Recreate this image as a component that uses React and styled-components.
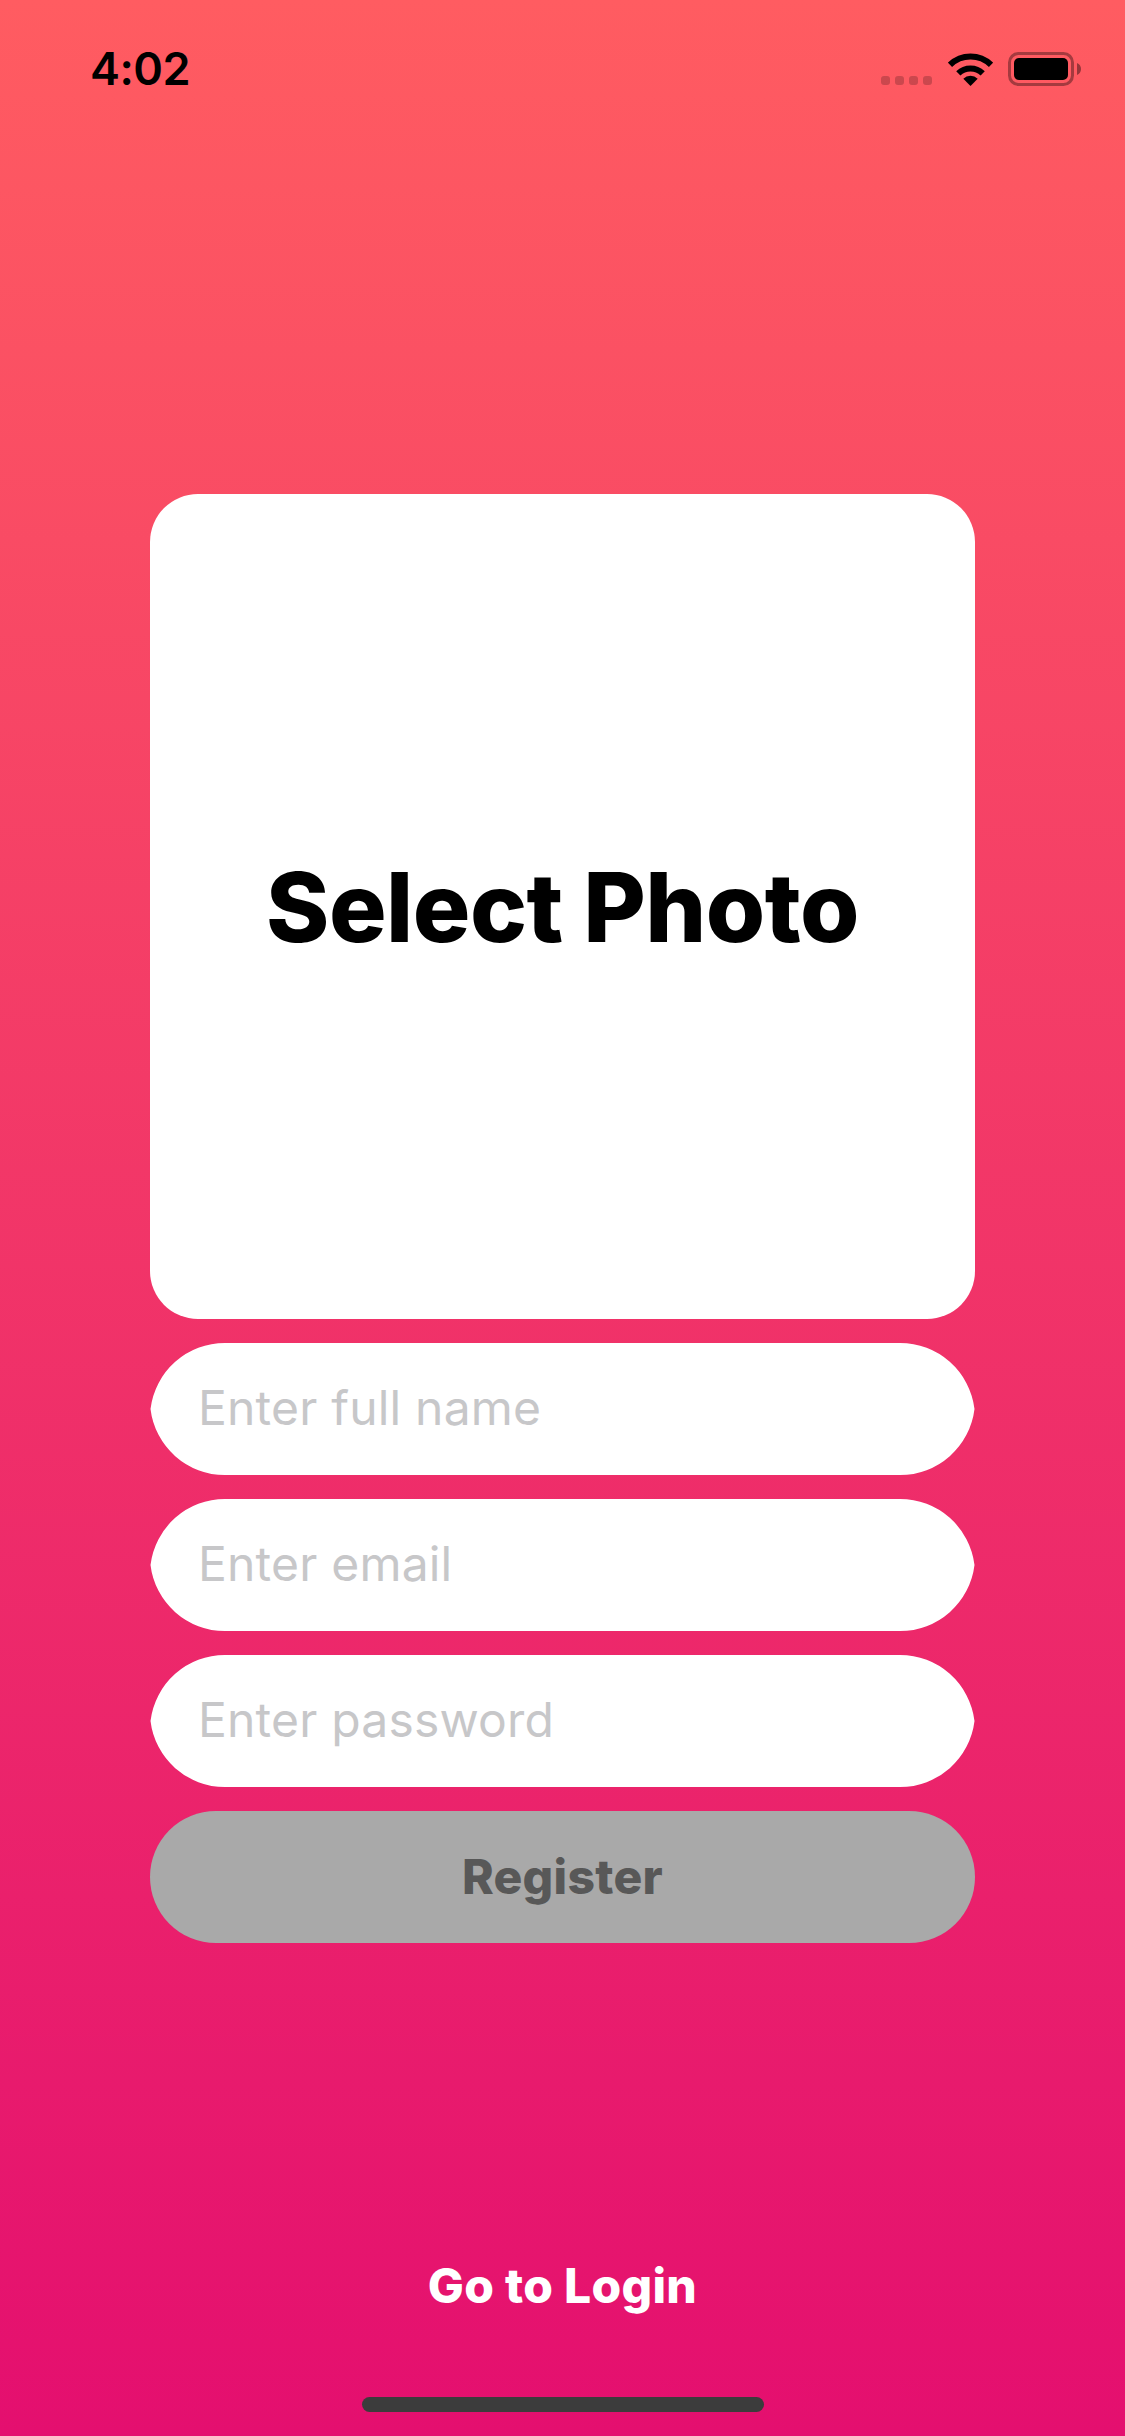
import React from 'react';
import styled, { createGlobalStyle } from 'styled-components';

const GlobalStyle = createGlobalStyle`
  html, body {
    margin: 0;
    padding: 0;
  }
  body {
    font-family: 'Inter', 'Liberation Sans', sans-serif;
  }
`;

const Screen = styled.div`
  width: 1125px;
  height: 2436px;
  display: flex;
  flex-direction: column;
  align-items: center;
  overflow: hidden;
  background: linear-gradient(180deg, #ff5c61 0%, #e40f6f 100%);
`;

const StatusBar = styled.div`
  width: 100%;
  height: 132px;
  box-sizing: border-box;
  padding: 47px 43px 0 90px;
  display: flex;
  justify-content: space-between;
  align-items: flex-start;
`;

const Time = styled.span`
  font-size: 45px;
  line-height: 44px;
  font-weight: 600;
  letter-spacing: -0.5px;
  color: #000;
`;

const StatusIcons = styled.div`
  display: flex;
  align-items: flex-end;
  margin-top: 5px;
`;

const SignalDots = styled.div`
  display: flex;
  gap: 5px;
  margin-right: 16px;
  margin-bottom: 1px;
`;

const SignalDot = styled.span`
  width: 9px;
  height: 9px;
  border-radius: 3px;
  background: rgba(0, 0, 0, 0.2);
`;

const WifiIcon = styled.svg`
  width: 45px;
  height: 33px;
  margin-right: 15px;
`;

const BatteryIcon = styled.svg`
  width: 74px;
  height: 34px;
`;

const Form = styled.form`
  width: 825px;
  margin: 362px 0 0;
  display: flex;
  flex-direction: column;
  gap: 24px;
`;

const PhotoButton = styled.button`
  width: 825px;
  height: 825px;
  border: 0;
  padding: 0;
  border-radius: 48px;
  background: #fff;
  color: #000;
  font-family: inherit;
  font-size: 96px;
  font-weight: 800;
  letter-spacing: -0.5px;
`;

// the two 75px corners overlap on a 132px tall field, so the sides end in a point
const Field = styled.input`
  width: 825px;
  height: 132px;
  box-sizing: border-box;
  border: 0;
  outline: 0;
  padding: 0 48px 3px;
  background: #fff;
  font-family: inherit;
  font-size: 48px;
  letter-spacing: 0.2px;
  color: #000;
  clip-path: path('M75 0 H750 A75 75 0 0 1 824.5 66 A75 75 0 0 1 750 132 H75 A75 75 0 0 1 0.5 66 A75 75 0 0 1 75 0 Z');

  &::placeholder {
    color: #c7c7c9;
    opacity: 1;
  }
`;

const RegisterButton = styled.button`
  height: 132px;
  border: 0;
  padding: 0 0 2px;
  border-radius: 66px;
  background: #a9a9a9;
  color: #585858;
  font-family: inherit;
  font-size: 48px;
  font-weight: 800;
  letter-spacing: 0.3px;
`;

const LoginLink = styled.button`
  margin-top: auto;
  border: 0;
  padding: 0;
  background: none;
  color: #fff;
  font-family: inherit;
  font-size: 48px;
  line-height: 58px;
  font-weight: 800;
  letter-spacing: 0.3px;
`;

const HomeIndicator = styled.div`
  width: 402px;
  height: 15px;
  margin: 82px 0 24px;
  border-radius: 8px;
  background: #3c3c3c;
`;

const App = () => {
  return (
    <Screen>
      <GlobalStyle />
      <StatusBar>
        <Time>4:02</Time>
        <StatusIcons>
          <SignalDots>
            {[0, 1, 2, 3].map((i) => (
              <SignalDot key={i} />
            ))}
          </SignalDots>
          <WifiIcon viewBox="0 0 45 33">
            <path d="M2 11.8 A29.5 29.5 0 0 1 43 11.8" fill="none" stroke="#000" strokeWidth="6" />
            <path d="M10.3 20.4 A17.5 17.5 0 0 1 34.7 20.4" fill="none" stroke="#000" strokeWidth="6" />
            <path d="M22.5 33 L15.3 25.8 A10.2 10.2 0 0 1 29.7 25.8 Z" fill="#000" />
          </WifiIcon>
          <BatteryIcon viewBox="0 0 74 34">
            <rect x="1.5" y="1.5" width="63" height="31" rx="9" fill="none" stroke="#000" strokeOpacity="0.35" strokeWidth="3" />
            <rect x="6" y="6" width="54" height="22" rx="5" fill="#000" />
            <path d="M69 11 C71.5 12 73 14.2 73 17 C73 19.8 71.5 22 69 23 Z" fill="#000" fillOpacity="0.4" />
          </BatteryIcon>
        </StatusIcons>
      </StatusBar>
      <Form>
        <PhotoButton type="button">Select Photo</PhotoButton>
        <Field type="text" placeholder="Enter full name" />
        <Field type="email" placeholder="Enter email" />
        <Field type="password" placeholder="Enter password" />
        <RegisterButton type="button">Register</RegisterButton>
      </Form>
      <LoginLink type="button">Go to Login</LoginLink>
      <HomeIndicator />
    </Screen>
  );
};

export default App;
